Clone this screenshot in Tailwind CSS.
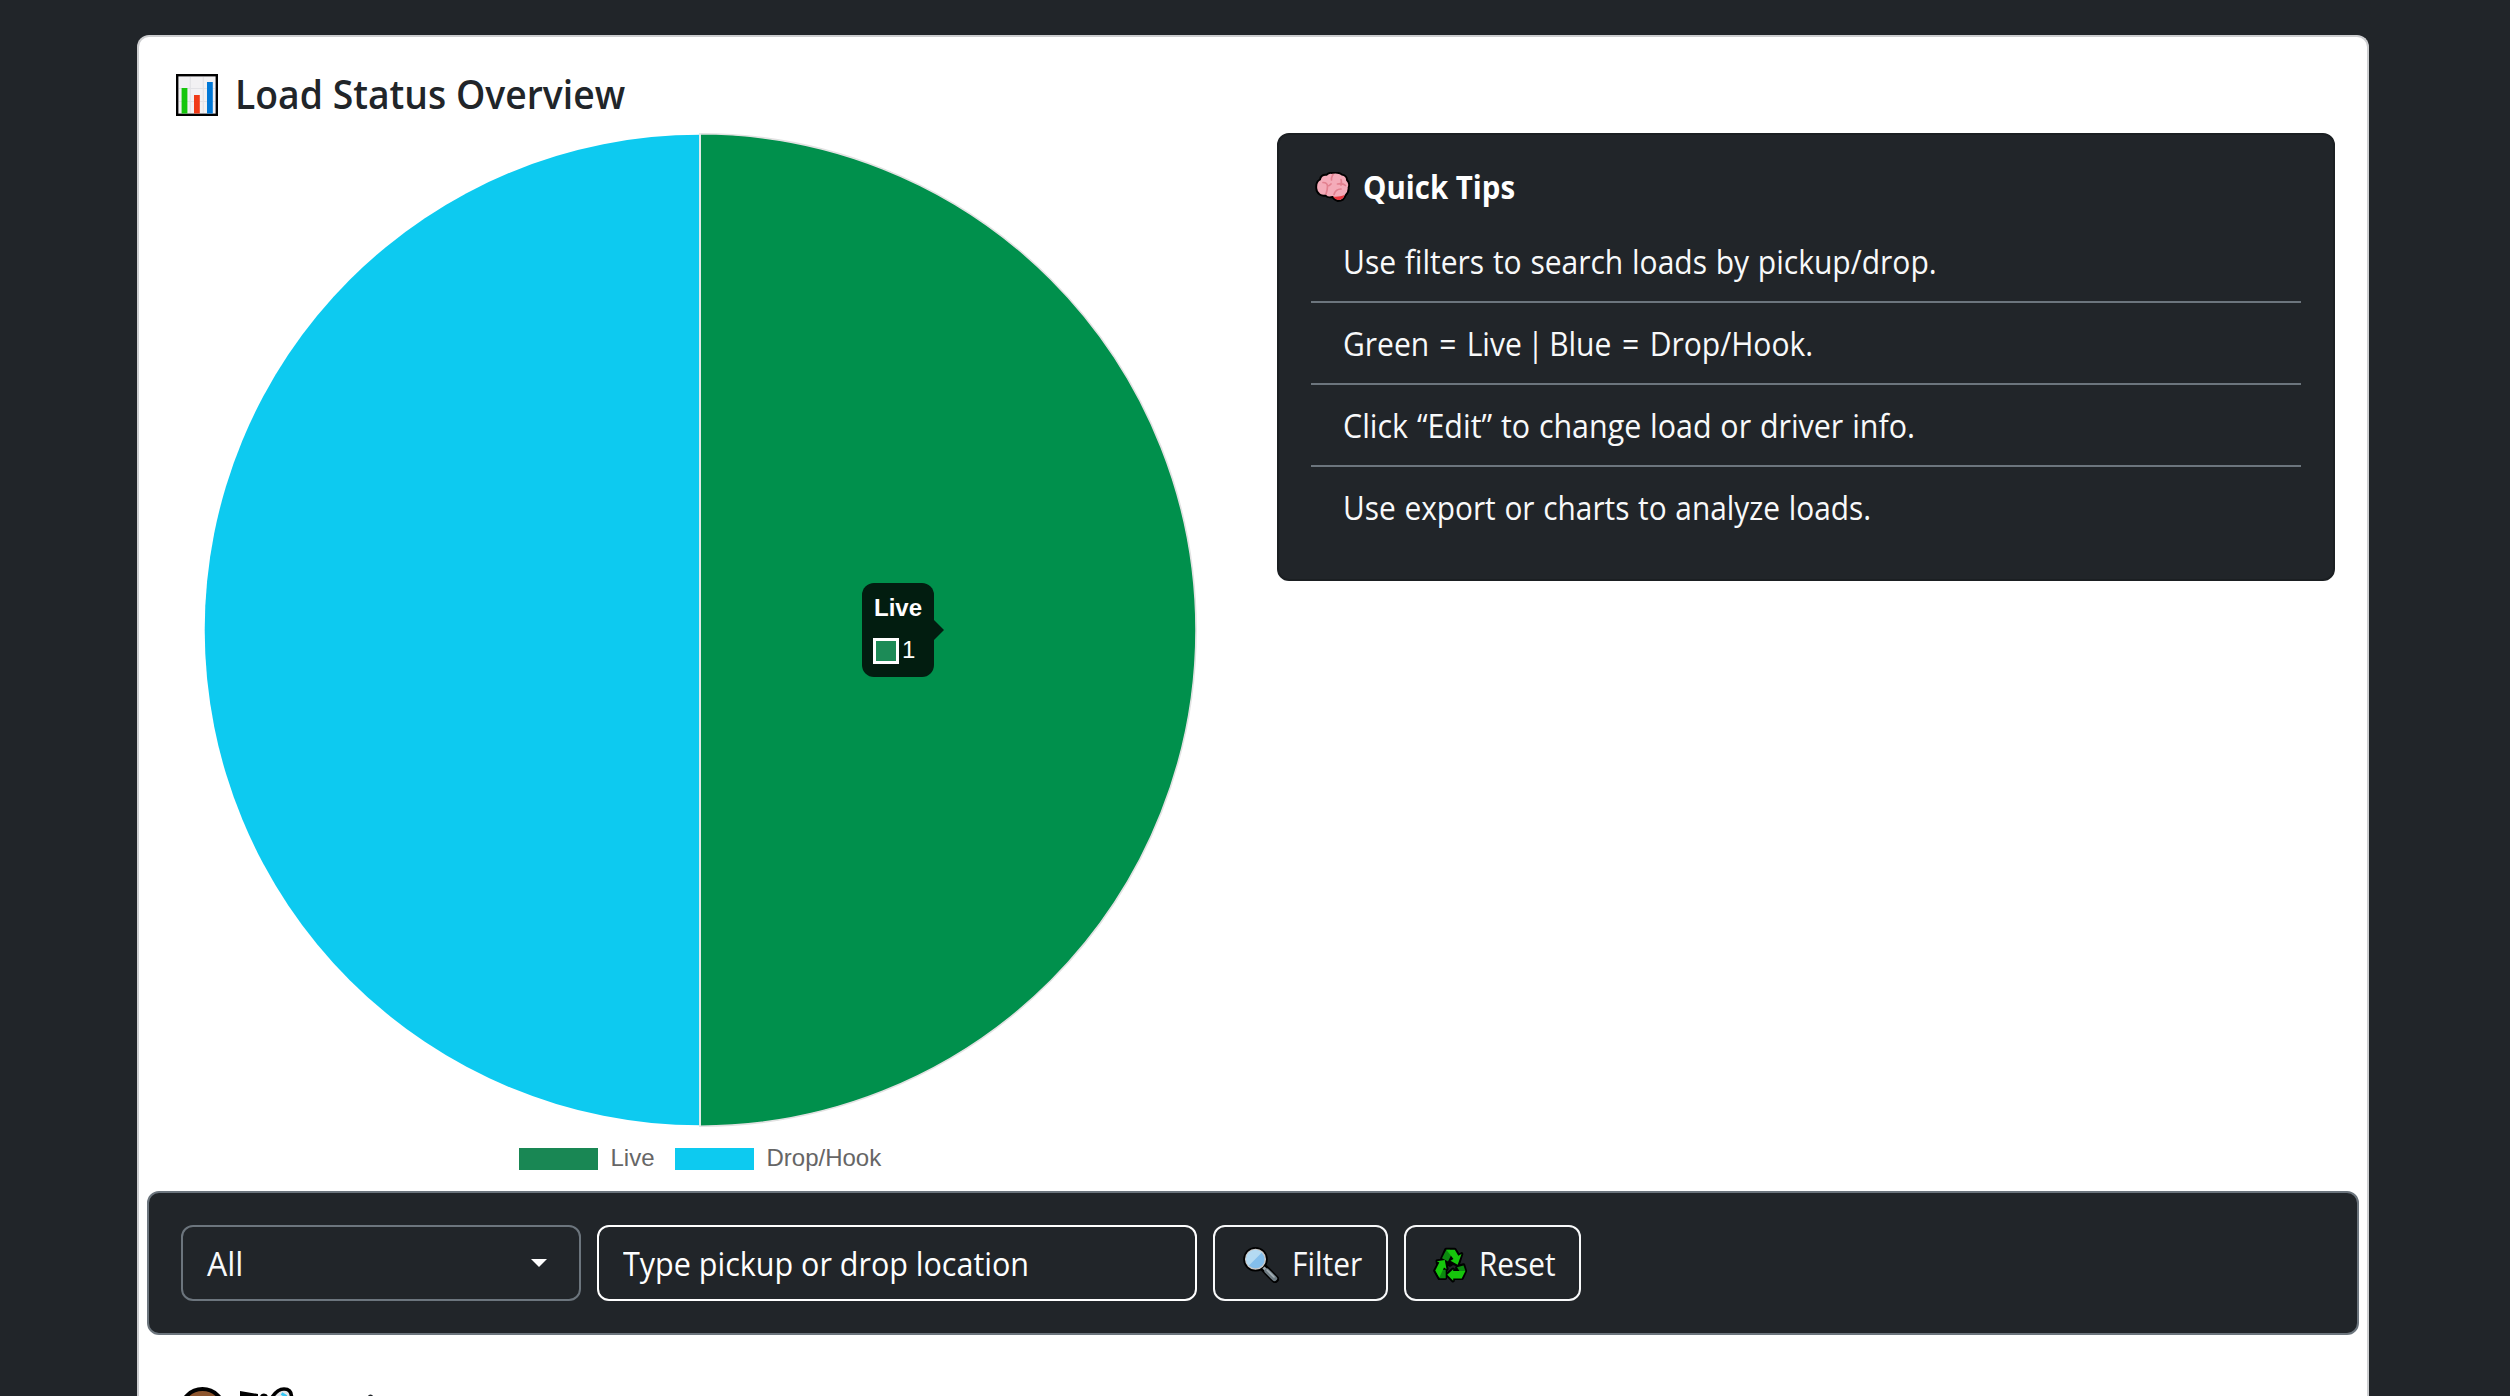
<!DOCTYPE html>
<html lang="en">
<head>
<meta charset="utf-8">
<title>Load Status Overview</title>
<script src="https://cdn.jsdelivr.net/npm/@tailwindcss/browser@4"></script>
</head>
<body class="h-[1396px] overflow-hidden bg-[#212529] pt-[35px] font-['Open_Sans','Noto_Sans',sans-serif] text-[32px] leading-[48px]">
<main class="ml-[137px] h-[1361px] w-[2232px] overflow-hidden rounded-t-[12px] border-2 border-b-0 border-[#cdced0] bg-white px-2 pt-8">

  <h1 class="ml-[29px] flex h-12 items-center text-[40px] font-semibold text-[#212529]">
    <svg class="mt-1 h-[42px] w-[42px] shrink-0" viewBox="0 0 42 42">
      <rect x="1.2" y="1.2" width="39.6" height="39.6" fill="#f2f1f3" stroke="#000" stroke-width="2.4"/>
      <path d="M14.3 3v36M27.3 3v36M3 14.5h36M3 27.5h36" stroke="#e2e2e6" stroke-width="1.2"/>
      <path d="M5.6 14h5.8v25.4H5.6z" fill="#16c60c"/>
      <path d="M18 21h5.8v18.4H18z" fill="#f03a17"/>
      <path d="M31 8h5.8v31.4H31z" fill="#0078d7"/>
    </svg>
    <span class="ml-[17px] mt-[2px] inline-block origin-left scale-x-[0.933] whitespace-nowrap">Load Status Overview</span>
  </h1>

  <section class="mt-4 flex h-[1058px] items-start">
    <div class="relative ml-[53px] w-[1000px] shrink-0">
      <svg class="block h-[1000px] w-[1000px]" viewBox="0 0 1000 1000">
        <path d="M500 1.700A495.300 495.300 0 0 0 500 992.300Z" fill="#0dcaf0"/>
        <path d="M500 .8A496.200 496.200 0 0 1 500 993.200Z" fill="#00904c" stroke="#e2e2e2" stroke-width="1.600"/>
        <path d="M499 0h2v993.800h-2z" fill="#e0eae8"/>
      </svg>
      <div class="mt-[12px] flex h-[26px] items-center pl-[319px] font-['Liberation_Sans',Arial,sans-serif] text-[24px] leading-[26px] text-[#666]">
        <span class="mt-px h-[22px] w-[78.5px] bg-[#198754]"></span>
        <span class="ml-[13px] w-[64.5px]">Live</span>
        <span class="mt-px h-[22px] w-[78.5px] bg-[#0dcaf0]"></span>
        <span class="ml-[13px]">Drop/Hook</span>
      </div>
      <div class="absolute left-[662px] top-[450px] h-[94px] w-[72px] rounded-[12px] bg-[#021d10] px-[11px] pt-[11px] font-['Liberation_Sans',Arial,sans-serif] text-[24px] leading-[28px] text-white">
        <div class="pl-px font-bold">Live</div>
        <div class="mt-[15px] flex items-center gap-[3px]">
          <span class="h-[26px] w-[26px] shrink-0 border-[3px] border-white bg-[#1c8b57]"></span>
          <span class="-mt-px">1</span>
        </div>
        <svg class="absolute left-[72px] top-[37px] h-5 w-[10px]" viewBox="0 0 10 20"><path d="M0 0l10 10L0 20z" fill="#021d10"/></svg>
      </div>
    </div>

    <div class="ml-[77px] h-[448px] w-[1058px] shrink-0 rounded-[12px] border-2 border-[#1b1f22] bg-[#212529] p-8 text-[#f8f9fa]">
      <h2 class="mb-4 flex h-[38px] items-center font-bold leading-[38px] text-white">
        <svg class="ml-1 mt-[2px] h-[30px] w-[35px] shrink-0" viewBox="0 0 35 30">
          <path d="M17 1C20 .2 25 .6 27 2.6c3 .6 5 3 5 5.4 2 2 2.600 5 1.600 7.500C34 20 32 22 30.500 23.500 29.500 27 27 29 23 29c-2.500-1-4.500-2-5.500-4-3 .8-5.500.3-7-1.500C7 24.500 1.500 22 1.300 16.500.8 12 2 9 5 7.500 5.500 4.500 8 2.500 11.500 2.800 13 1.200 15 .6 17 1z" fill="#f4abb9" stroke="#000" stroke-width="1.9"/>
          <path d="M18 24.500c4 .8 8-.3 11.500-1.500-.8 3.500-3.500 5-6.500 5-2.200-.7-4-1.700-5-3.500z" fill="#e8373f"/>
          <path d="M18 2.500c-1 2-2 3-1.500 5.500M8 10.500c3 0 4.500 2 4.500 4s-.8 5.500-1.500 7.500M12.500 14c1.500 0 2.500-.8 3.500-2M26 7.500c.5 2 1 3 0 5.500M22.500 12c3-.6 6-.5 8 1.500M19 22.500c1-3.500 4-5.500 7-5.500" fill="none" stroke="#e2808f" stroke-width="1.700" stroke-linecap="round"/>
        </svg>
        <span class="ml-[13px] mt-[2px] inline-block origin-left scale-x-[0.92] whitespace-nowrap">Quick Tips</span>
      </h2>
      <ul>
        <li class="h-[82px] border-b-2 border-[#6c757d] px-[32px] pt-[17px]"><span class="inline-block origin-left scale-x-[0.938] whitespace-nowrap [word-spacing:1px]">Use filters to search loads by pickup/drop.</span></li>
        <li class="h-[82px] border-b-2 border-[#6c757d] px-[32px] pt-[17px]"><span class="inline-block origin-left scale-x-[0.938] whitespace-nowrap">Green<span class="mx-[2.500px]"> = </span>Live<span class="mx-[-2.500px]"> | </span>Blue<span class="mx-[3px]"> = </span>Drop/Hook.</span></li>
        <li class="h-[82px] border-b-2 border-[#6c757d] px-[32px] pt-[17px]"><span class="inline-block origin-left scale-x-[0.950] whitespace-nowrap [word-spacing:1px]">Click “Edit” to change load or driver info.</span></li>
        <li class="h-20 px-[32px] pt-[17px]"><span class="inline-block origin-left scale-x-[0.932] whitespace-nowrap [word-spacing:1px]">Use export or charts to analyze loads.</span></li>
      </ul>
    </div>
  </section>

  <form class="flex h-[144px] w-[2212px] items-center gap-4 rounded-[12px] border-2 border-[#6c757d] bg-[#212529] px-8 text-[#f8f9fa]">
    <div class="flex h-[76px] w-[400px] items-center justify-between rounded-[12px] border-2 border-[#6c757d] pl-6 pr-8">
      <span class="mt-[2px] inline-block origin-left">All</span>
      <svg class="h-2 w-4" viewBox="0 0 16 8"><path d="M0 0h16L8 8z" fill="#fff"/></svg>
    </div>
    <div class="flex h-[76px] w-[600px] items-center rounded-[12px] border-2 border-white pl-6">
      <span class="mt-[2px] inline-block origin-left scale-x-[0.953] whitespace-nowrap text-white">Type pickup or drop location</span>
    </div>
    <button type="button" class="flex h-[76px] w-[175px] items-center rounded-[12px] border-2 border-[#f8f9fa] pl-[28px]">
      <svg class="mt-[4px] h-9 w-9 shrink-0" viewBox="0 0 36 36">
        <path d="M21 21l11 11" stroke="#000" stroke-width="8" stroke-linecap="round"/>
        <circle cx="12.500" cy="12.300" r="12.300" fill="#000"/>
        <path d="M20.500 20.500l3 3" stroke="#9aa5ab" stroke-width="3"/>
        <path d="M24 24l7.500 7.500" stroke="#6e7b83" stroke-width="5.200" stroke-linecap="round"/>
        <path d="M24 23l7 7" stroke="#a5b0b6" stroke-width="1.600" stroke-linecap="round"/>
        <circle cx="12.500" cy="12.300" r="9.800" fill="#83beec" stroke="#c9c9c9" stroke-width="1.500"/>
        <path d="M5.700 18.700A9.200 9.200 0 0 1 18.900 5.600z" fill="#b4daf2"/>
      </svg>
      <span class="ml-[13px] mt-[2px] inline-block origin-left scale-x-[0.935]">Filter</span>
    </button>
    <button type="button" class="flex h-[76px] w-[177px] items-center rounded-[12px] border-2 border-[#f8f9fa] pl-[27px]">
      <svg class="mt-[4px] h-9 w-[34px] shrink-0" viewBox="0 0 34 36">
        <g stroke="#000" stroke-width="3.600" stroke-linejoin="round" fill="#000">
          <path d="M13 2.500h8.700l3.800 6 3-1.500-3.500 11-5-2-3 2-8-6.500zM4.300 14l7.500-1 2 9-1.500 1v8.300H6.300L2 23.700l3-5.500zM24 20l6.500-2 1.800 6-3.300 7.300h-9v2.400L14 27.500l6-5.200V24h4z"/>
        </g>
        <path d="M13.300 2.700L9 11.300l6 3.200 4-8-2-3.800z" fill="#0c8a10"/>
        <path d="M13.300 2.700h8.500l3.500 6 3.200-1.600-3.800 10.700-7.200-4 3-1.700z" fill="#16c60c"/>
        <path d="M2.500 23.500l4.200 7.800h6v-8.500H7z" fill="#0c8a10"/>
        <path d="M3.800 14.200l8-1.200 1.700 9.300-2.500-1.700-4.700 10L2.300 23.500l4-8z" fill="#16c60c"/>
        <path d="M24 20.300l6.500-1.800 1.900 5.500h-6z" fill="#0c8a10"/>
        <path d="M32.400 24l-3.700 7.500h-8.500v2.200L14.200 27.700l6-5.400V24z" fill="#16c60c"/>
      </svg>
      <span class="ml-[12px] mt-[2px] inline-block origin-left scale-x-[0.93]">Reset</span>
    </button>
  </form>

  <div class="mt-[52px] pl-[34px]">
    <svg class="block h-[9px] w-[200px]" viewBox="0 0 200 9">
      <circle cx="21.500" cy="23.500" r="21.500" fill="#8e562e" stroke="#000" stroke-width="4"/>
      <path d="M59 4l18 3v2h-18z" fill="#000"/>
      <circle cx="83" cy="10.500" r="4" fill="#000"/>
      <path d="M90 12C94 5 98 2 103 2c5 0 7.500 3 7.500 8" fill="#e3e6e8" stroke="#000" stroke-width="3.600"/>
      <path d="M100.500 6.500l5 3" stroke="#35c8f5" stroke-width="3"/>
      <circle cx="189.500" cy="10.200" r="2.700" fill="#212529"/>
    </svg>
  </div>
</main>
</body>
</html>
